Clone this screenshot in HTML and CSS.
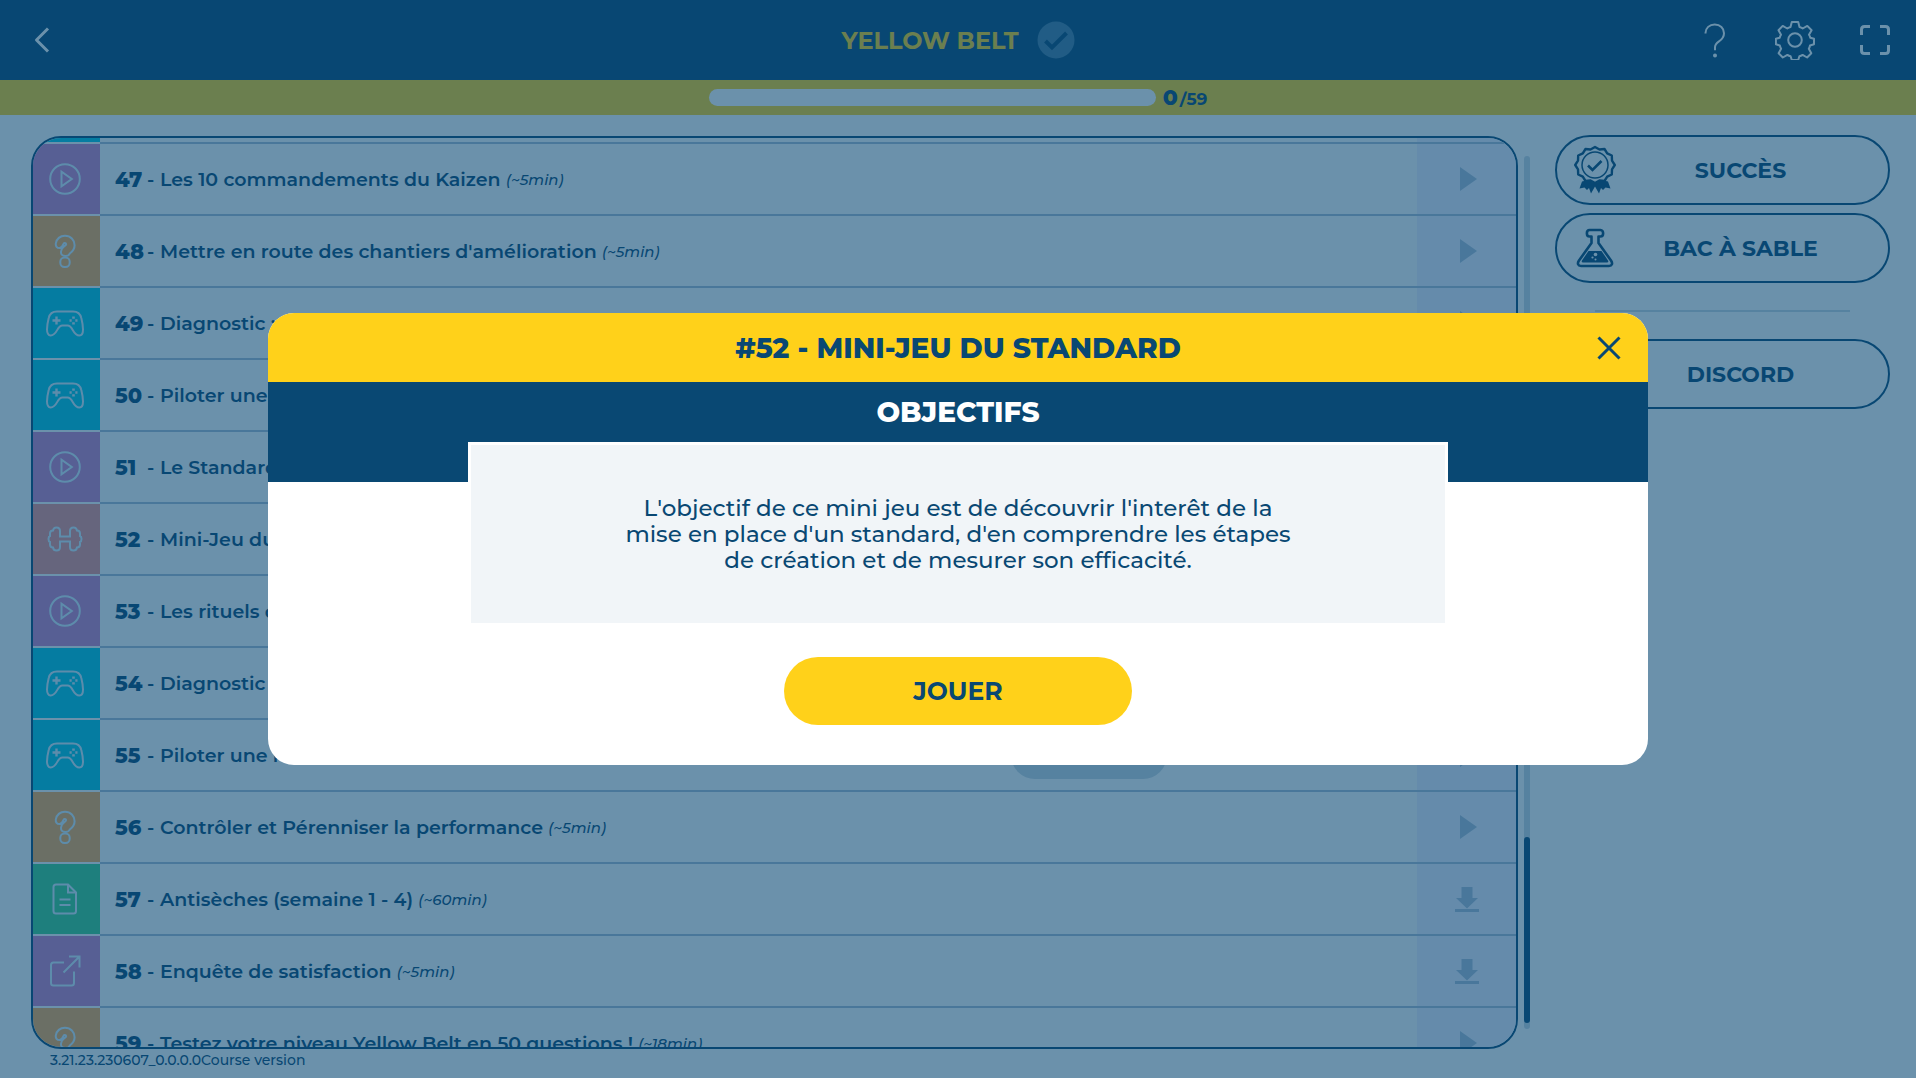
FILE: index.html
```html
<!DOCTYPE html>
<html lang="fr">

<head>
    <meta charset="UTF-8">
    <meta name="viewport" content="width=device-width, initial-scale=1.0">
    <title>Yellow Belt</title>
    <link rel="stylesheet" href="styles.css">
</head>

<body>

    <!-- icons -->
    <svg class="sprite" aria-hidden="true">
        <symbol id="i-video" viewBox="0 0 40 40">
            <circle cx="20" cy="20" r="14.8"/>
            <path d="M16.5 12.7v14.6l10.3-7.3z"/>
        </symbol>
        <symbol id="i-quiz" viewBox="0 0 40 40">
            <path d="M14.500 17c-2.600 0-4-1.800-3.700-4.500.6-4.600 4.400-7.800 9.200-7.800 5.500 0 9.600 4.200 9.600 9.500 0 4.200-2.200 6.400-4.800 8.300-.6 1.500-2.400 2.500-4.600 2.500-2.800 0-4.400-1.500-4.200-4.300.2-2.800 1.400-4.200 3-5.300 1.500-1 2.300-1.400 2.100-2.400-.3-1.200-2-1.200-2.600-.1-.8 2-1.500 4.100-4 4.100z"/>
            <rect x="15.300" y="26.500" width="9.400" height="9.500" rx="4.200"/>
        </symbol>
        <symbol id="i-game" viewBox="0 0 40 40">
            <path d="M12 8.500h16c5 0 7.300 2 8.300 6.500 1 4 1.700 8 1.700 11.500 0 3.500-1.300 6-3.600 6-3.200 0-5.100-2.700-6.700-5.600-1.700-3.200-2.900-4.400-5.200-4.400h-5c-2.300 0-3.500 1.200-5.200 4.400-1.600 2.900-3.500 5.600-6.700 5.600-2.300 0-3.600-2.500-3.600-6 0-3.500.7-7.500 1.700-11.500 1-4.500 3.300-6.500 8.300-6.500z"/>
            <path d="M11.500 13.500v8M7.500 17.500h8" stroke-width="2.400"/>
            <path d="M28.500 13.500v2.200M28.500 19.300v2.200M24.500 17.500h2.200M30.300 17.500h2.200" stroke-width="2.600"/>
        </symbol>
        <symbol id="i-train" viewBox="0 0 40 40">
            <path d="M15 17.500h10v-5.500q0-3.500 3.500-3.500 3 0 3.500 3 3 0 3 3v2.500q1.500.5 1.500 3t-1.500 3v2.500q0 3-3 3-.5 3-3.500 3-3.500 0-3.500-3.500v-5.500h-10v5.500q0 3.500-3.500 3.500-3 0-3.500-3-3 0-3-3v-2.500q-1.500-.5-1.500-3t1.500-3v-2.500q0-3 3-3 .5-3 3.500-3 3.500 0 3.500 3.500z"/>
        </symbol>
        <symbol id="i-doc" viewBox="0 0 40 40">
            <path d="M11 5.500h12l8 8v18.500q0 2.500-2.500 2.500h-17.500q-2.500 0-2.500-2.500v-24q0-2.500 2.500-2.500z"/>
            <path d="M23 5.500v8h8M14.500 20.500h11M14.500 26h11"/>
        </symbol>
        <symbol id="i-link" viewBox="0 0 40 40">
            <path d="M19 11.500h-10.500q-2.500 0-2.500 2.500v18q0 2.500 2.500 2.500h18q2.500 0 2.500-2.500v-11.500M24 5.500h10.500v11M34.500 5.500l-16 16"/>
        </symbol>
        <symbol id="i-go" viewBox="0 0 24 26">
            <path d="M5 1l17 12-17 12z"/>
        </symbol>
        <symbol id="i-down" viewBox="0 0 24 26">
            <path d="M6.500 1h11v11h5.500l-11 10.500-11-10.500h5.500zM0 23h24v3h-24z"/>
        </symbol>
    </svg>

    <header class="topbar">
        <div class="side">
            <button class="icon-btn" aria-label="Retour">
                <svg width="20" height="30" viewBox="0 0 20 30" stroke-width="3"><path d="M17 3.500l-11.500 11.500 11.500 11.500"/></svg>
            </button>
        </div>
        <h1 class="course">YELLOW BELT
            <svg class="check" width="38" height="38" viewBox="0 0 38 38"><circle cx="19" cy="19" r="18.500"/><path d="M8.500 20l6.500 6.500 14.500-14.500"/></svg>
        </h1>
        <div class="side right">
            <button class="icon-btn" aria-label="Aide">
                <svg width="28" height="38" viewBox="0 0 28 38" stroke-width="2"><path d="M4.500 12.500v-.5c0-5 4-8.500 9.200-8.500 5.500 0 9.300 3.500 9.300 8.700 0 4-2 6.100-5 8.100-3 2-4 3.200-4 6v3"/><circle cx="14" cy="34.500" r="1"/></svg>
            </button>
            <button class="icon-btn" aria-label="Paramètres">
                <svg width="40" height="40" viewBox="0 0 40 40" stroke-width="2"><circle cx="20" cy="20" r="6.800"/><path d="M16.800 2h6.400l1.300 5q1.800.5 3.200 1.500l4.600-2.600 4.300 4.300-2.600 4.600q1 1.500 1.300 3l3.700 1v5.500l-4 1.200q-.3 1.800-1.200 3.200l2.500 4.600-4.200 4.200-4.500-2.600q-1.500 1-3.200 1.400l-1.200 3.700h-6.400l-1.200-3.700q-1.800-.4-3.200-1.400l-4.600 2.600-4.200-4.200 2.500-4.600q-.9-1.500-1.300-3.200l-3.900-1.200v-5.500l3.800-1q.4-1.600 1.300-3l-2.500-4.600 4.200-4.300 4.600 2.600q1.500-1 3.200-1.500z"/></svg>
            </button>
            <button class="icon-btn" aria-label="Plein écran">
                <svg width="32" height="32" viewBox="0 0 32 32" stroke-width="3"><path d="M2.500 11v-5.500q0-3 3-3h5.500M21 2.500h5.500q3 0 3 3v5.500M29.500 21v5.500q0 3-3 3h-5.500M11 29.500h-5.500q-3 0-3-3v-5.500"/></svg>
            </button>
        </div>
    </header>

    <div class="progress">
        <div class="bar"></div>
        <p class="count"><b>0</b>/59</p>
    </div>

    <main class="content">
        <div class="list">
            <div class="row cut"><span class="tile game"></span><span class="title"></span><span class="action"></span></div>
            <div class="row">
                <span class="tile video"><svg><use href="#i-video"/></svg></span>
                <p class="title"><b>47</b><i>-</i>Les 10 commandements du Kaizen <em>(~5min)</em></p>
                <button class="action" aria-label="Lancer"><svg><use href="#i-go"/></svg></button>
            </div>
            <div class="row">
                <span class="tile quiz"><svg><use href="#i-quiz"/></svg></span>
                <p class="title"><b>48</b><i>-</i>Mettre en route des chantiers d'amélioration <em>(~5min)</em></p>
                <button class="action" aria-label="Lancer"><svg><use href="#i-go"/></svg></button>
            </div>
            <div class="row">
                <span class="tile game"><svg><use href="#i-game"/></svg></span>
                <p class="title"><b>49</b><i>-</i>Diagnostic : P</p>
                <button class="action" aria-label="Lancer"><svg><use href="#i-go"/></svg></button>
            </div>
            <div class="row">
                <span class="tile game"><svg><use href="#i-game"/></svg></span>
                <p class="title"><b>50</b><i>-</i>Piloter une</p>
                <button class="action" aria-label="Lancer"><svg><use href="#i-go"/></svg></button>
            </div>
            <div class="row">
                <span class="tile video"><svg><use href="#i-video"/></svg></span>
                <p class="title"><b>51</b><i>-</i>Le Standard</p>
                <button class="action" aria-label="Lancer"><svg><use href="#i-go"/></svg></button>
            </div>
            <div class="row">
                <span class="tile train"><svg><use href="#i-train"/></svg></span>
                <p class="title"><b>52</b><i>-</i>Mini-Jeu du Standard</p>
                <button class="action" aria-label="Lancer"><svg><use href="#i-go"/></svg></button>
            </div>
            <div class="row">
                <span class="tile video"><svg><use href="#i-video"/></svg></span>
                <p class="title"><b>53</b><i>-</i>Les rituels d</p>
                <button class="action" aria-label="Lancer"><svg><use href="#i-go"/></svg></button>
            </div>
            <div class="row">
                <span class="tile game"><svg><use href="#i-game"/></svg></span>
                <p class="title"><b>54</b><i>-</i>Diagnostic :</p>
                <button class="action" aria-label="Lancer"><svg><use href="#i-go"/></svg></button>
            </div>
            <div class="row">
                <span class="tile game"><svg><use href="#i-game"/></svg></span>
                <p class="title"><b>55</b><i>-</i>Piloter une r</p>
                <span class="pill"></span>
                <button class="action" aria-label="Lancer"><svg><use href="#i-go"/></svg></button>
            </div>
            <div class="row">
                <span class="tile quiz"><svg><use href="#i-quiz"/></svg></span>
                <p class="title"><b>56</b><i>-</i>Contrôler et Pérenniser la performance <em>(~5min)</em></p>
                <button class="action" aria-label="Lancer"><svg><use href="#i-go"/></svg></button>
            </div>
            <div class="row">
                <span class="tile doc"><svg><use href="#i-doc"/></svg></span>
                <p class="title"><b>57</b><i>-</i>Antisèches (semaine 1 - 4) <em>(~60min)</em></p>
                <button class="action" aria-label="Télécharger"><svg><use href="#i-down"/></svg></button>
            </div>
            <div class="row">
                <span class="tile video"><svg><use href="#i-link"/></svg></span>
                <p class="title"><b>58</b><i>-</i>Enquête de satisfaction <em>(~5min)</em></p>
                <button class="action" aria-label="Télécharger"><svg><use href="#i-down"/></svg></button>
            </div>
            <div class="row">
                <span class="tile quiz"><svg><use href="#i-quiz"/></svg></span>
                <p class="title"><b>59</b><i>-</i>Testez votre niveau Yellow Belt en 50 questions ! <em>(~18min)</em></p>
                <button class="action" aria-label="Lancer"><svg><use href="#i-go"/></svg></button>
            </div>
        </div>

        <div class="scroll"><div class="thumb"></div></div>

        <aside class="menu">
            <button class="menu-btn">
                <svg width="44" height="50" viewBox="0 0 44 50">
                    <path fill="none" stroke="currentColor" stroke-width="2.400" stroke-linejoin="round" d="M22 2l4.500 2.500 5-.5 2.700 4.300 4.600 2.200.2 5.200 2.800 4.300-2.800 4.300-.2 5.200-4.600 2.200-2.700 4.300-5-.5-4.500 2.500-4.500-2.500-5 .5-2.700-4.300-4.600-2.200-.2-5.200-2.800-4.300 2.800-4.300.2-5.200 4.600-2.200 2.700-4.300 5 .5z"/>
                    <circle cx="22" cy="20" r="13" fill="none" stroke="currentColor" stroke-width="1.500"/>
                    <path fill="none" stroke="currentColor" stroke-width="2.600" d="M15 20.500l4.500 4.500 9-9"/>
                    <path fill="currentColor" d="M9 36.500l4-1 4 1 5 1.500 5-1.500 4-1 4 1 2.500 7-5-1-2.500 2.500-2-2-2 5.500-4-7-4 7-2-5.500-2 2-2.500-2.500-5 1z"/>
                </svg>
                <span>SUCCÈS</span>
            </button>
            <button class="menu-btn">
                <svg width="44" height="44" viewBox="0 0 44 44">
                    <path fill="none" stroke="currentColor" stroke-width="2.600" stroke-linejoin="round" d="M18.500 10.500v6.500l-12.500 17.500c-2 3-1 5.500 2 5.500h28c3 0 4-2.500 2-5.500l-12.500-17.500v-6.500h2c3.500 0 3.500-6.500 0-6.500h-11c-3.500 0-3.500 6.500 0 6.500z"/>
                    <path fill="currentColor" d="M15.500 25h13l6.500 9.500q1 2-1 2h-24q-2 0-1-2z"/>
                    <g fill="#fff"><circle cx="22.500" cy="28.500" r="1.800"/><circle cx="19.500" cy="31.500" r="1.100"/><circle cx="22.500" cy="33.500" r="1"/></g>
                </svg>
                <span>BAC À SABLE</span>
            </button>
            <hr>
            <button class="menu-btn">
                <span>DISCORD</span>
            </button>
        </aside>
    </main>

    <footer class="version">3.21.23.230607_0.0.0.0Course version</footer>

    <div class="overlay">
        <section class="modal" role="dialog" aria-labelledby="modalTitle">
            <div class="modal-head">
                <h2 id="modalTitle">#52 - MINI-JEU DU STANDARD</h2>
                <button class="close" aria-label="Fermer" onclick="closeModal()">
                    <svg width="24" height="24" viewBox="0 0 24 24"><path d="M1.500 1.500l21 21M22.500 1.500l-21 21"/></svg>
                </button>
            </div>
            <h3 class="modal-sub">OBJECTIFS</h3>
            <div class="modal-body">
                <p class="goal">L'objectif de ce mini jeu est de découvrir l'interêt de la<br>mise en place d'un standard, d'en comprendre les étapes<br>de création et de mesurer son efficacité.</p>
                <button class="play">JOUER</button>
            </div>
        </section>
    </div>

    <script>
        function closeModal() {
            document.querySelector('.overlay').style.display = 'none';
        }
    </script>
</body>

</html>
```

FILE: styles.css
```css
* {
    box-sizing: border-box;
}

body {
    margin: 0;
    height: 100vh;
    display: flex;
    flex-direction: column;
    overflow: hidden;
    font-family: Montserrat, Inter, sans-serif;
    color: #094873;
    background: #fff;
}

h1, h2, h3, p {
    margin: 0;
}

button {
    font-family: inherit;
    color: inherit;
    background: none;
    border: none;
    padding: 0;
    cursor: pointer;
}

svg {
    display: block;
}

.sprite {
    display: none;
}

/* top bar */
.topbar {
    flex: none;
    height: 80px;
    padding: 0 19px;
    display: flex;
    align-items: center;
    background: #094873;
}

.side {
    flex: 1;
    display: flex;
    align-items: center;
}

.right {
    justify-content: flex-end;
    gap: 36px;
}

.icon-btn {
    width: 44px;
    display: flex;
    justify-content: center;
}

.icon-btn svg {
    fill: none;
    stroke: #fff;
    stroke-linejoin: round;
}

.course {
    display: flex;
    align-items: center;
    gap: 18px;
    font-size: 24px;
    font-weight: 700;
    color: #ffd11a;
}

.check {
    fill: #487ba0;
}

.check path {
    fill: none;
    stroke: #094873;
    stroke-width: 4;
}

.progress {
    flex: none;
    height: 35px;
    display: flex;
    align-items: center;
    justify-content: center;
    gap: 7px;
    background: #ffd11a;
}

.bar {
    width: 447px;
    height: 17px;
    border-radius: 9px;
    background: #fff;
}

.count {
    display: flex;
    align-items: baseline;
    gap: 2px;
    font-size: 17px;
    font-weight: 700;
}

.count b {
    font-size: 22px;
    font-weight: 800;
}

/* list of lessons */
.content {
    flex: 1;
    min-height: 0;
    display: flex;
    padding: 20px 26px 0 31px;
}

.list {
    flex: 1;
    margin-top: 1px;
    border: 2px solid #094873;
    border-radius: 30px;
    overflow: hidden;
}

.row {
    display: flex;
    align-items: center;
    height: 72px;
}

.cut {
    height: 6px;
}

.tile {
    align-self: stretch;
    width: 67px;
    padding-right: 4px;
    border-bottom: 2px solid #fff;
    display: flex;
    align-items: center;
    justify-content: center;
}

.tile svg {
    width: 40px;
    height: 40px;
    fill: none;
    stroke: #dcf2ff;
    stroke-width: 2px;
}

.video { background: #cc82c5; }
.quiz { background: #ffab52; }
.game { background: #00cbe6; }
.train { background: #f2918c; }
.doc { background: #40d28c; }

.title {
    flex: 1;
    align-self: stretch;
    display: flex;
    align-items: center;
    padding-left: 15px;
    border-bottom: 2px solid #abbfd5;
    font-size: 19px;
    font-weight: 600;
    white-space: pre;
}

.title b {
    width: 32px;
    font-size: 21px;
    font-weight: 800;
}

.title i {
    width: 13px;
    font-style: normal;
}

.title em {
    font-size: 15px;
    font-weight: 500;
}

.action {
    align-self: stretch;
    width: 99px;
    border-bottom: 2px solid #abbfd5;
    background: #eff1ff;
    display: flex;
    align-items: center;
    justify-content: center;
}

.action svg {
    width: 24px;
    height: 26px;
    fill: #abbed7;
}

.pill {
    align-self: stretch;
    width: 406px;
    border-bottom: 2px solid #abbfd5;
    display: flex;
    align-items: center;
}

.pill::before {
    content: "";
    width: 156px;
    height: 48px;
    border-radius: 24px;
    background: #cbd9e3;
}

.scroll {
    width: 6px;
    margin: 21px 25px 20px 6px;
    padding-bottom: 6px;
    border-radius: 3px;
    background: #cbd9e3;
    display: flex;
    align-items: flex-end;
}

.thumb {
    width: 100%;
    height: 21.5%;
    border-radius: 3px;
    background: #094873;
}

/* side menu */
.menu {
    width: 335px;
}

.menu-btn {
    width: 100%;
    height: 70px;
    margin-bottom: 8px;
    padding: 0 24px 0 16px;
    border: 2px solid #094873;
    border-radius: 35px;
    display: grid;
    grid-template-columns: 44px 1fr;
    align-items: center;
    font-size: 22px;
    font-weight: 700;
}

.menu-btn span {
    grid-column: 2;
}

.menu hr {
    width: 76%;
    margin: 27px auto;
    border: none;
    border-top: 2px solid #cbd9e3;
}

.version {
    flex: none;
    height: 29px;
    padding: 2px 50px;
    font-size: 14px;
    font-weight: 500;
}

/* modal */
.overlay {
    position: absolute;
    inset: 0;
    display: flex;
    align-items: center;
    justify-content: center;
    background: rgba(9, 72, 115, 0.6);
}

.modal {
    width: 72%;
    border-radius: 26px;
    overflow: hidden;
    background: #fff;
    text-align: center;
}

.modal-head {
    height: 69px;
    padding: 0 27px 0 51px;
    display: flex;
    align-items: center;
    background: #ffd11a;
}

.modal-head h2 {
    flex: 1;
    font-size: 28px;
    font-weight: 800;
}

.close svg {
    fill: none;
    stroke: #094873;
    stroke-width: 3;
}

.modal-sub {
    height: 100px;
    padding-top: 13px;
    background: #094873;
    color: #fff;
    font-size: 28px;
    font-weight: 800;
}

.modal-body {
    display: flex;
    flex-direction: column;
    align-items: center;
    gap: 31px;
    padding-bottom: 40px;
}

.goal {
    width: 71%;
    margin-top: -40px;
    padding: 50px 20px;
    border: 3px solid #fff;
    background: #f1f5f8;
    font-size: 23px;
    line-height: 26px;
    font-weight: 500;
}

.play {
    width: 348px;
    height: 68px;
    border-radius: 34px;
    background: #ffd11a;
    font-size: 25px;
    font-weight: 700;
}
```
